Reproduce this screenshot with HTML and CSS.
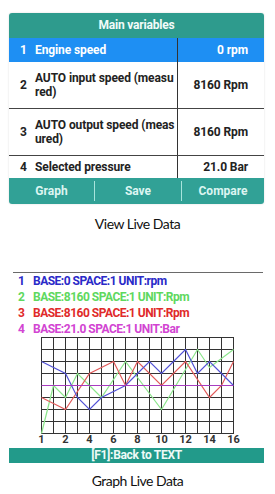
FILE: index.html
```html
<!DOCTYPE html>
<html lang="en">
  <head>
    <meta charset="utf-8" />
    <meta name="viewport" content="width=device-width, initial-scale=1.0" />
    <title>Live Data</title>
    <link rel="stylesheet" href="styles.css">
  </head>
  <body>
    <section class="panel">
      <header class="panel-head">Main variables</header>
      <div class="row row-active">
        <div class="name"><span class="num">1</span><span>Engine speed</span></div>
        <div class="value">0 rpm</div>
      </div>
      <div class="row row-tall">
        <div class="name"><span class="num">2</span><span>AUTO input speed (measu<br />red)</span></div>
        <div class="value">8160 Rpm</div>
      </div>
      <div class="row row-tall">
        <div class="name"><span class="num">3</span><span>AUTO output speed (meas<br />ured)</span></div>
        <div class="value">8160 Rpm</div>
      </div>
      <div class="row row-last">
        <div class="name"><span class="num">4</span><span>Selected pressure</span></div>
        <div class="value">21.0 Bar</div>
      </div>
      <nav class="tabs">
        <span class="tab">Graph</span>
        <span class="tab">Save</span>
        <span class="tab">Compare</span>
      </nav>
    </section>
    <p class="caption caption-first">View Live Data</p>

    <section class="graph-card">
      <div class="plot">
        <ul class="legend">
          <li class="c1"><span class="num">1</span>BASE:0 SPACE:1 UNIT:rpm</li>
          <li class="c2"><span class="num">2</span>BASE:8160 SPACE:1 UNIT:Rpm</li>
          <li class="c3"><span class="num">3</span>BASE:8160 SPACE:1 UNIT:Rpm</li>
          <li class="c4"><span class="num">4</span>BASE:21.0 SPACE:1 UNIT:Bar</li>
        </ul>
        <svg class="chart" width="250" height="111" viewBox="0 0 250 111">
          <!-- 16 x 8 grid, 12px cells -->
          <path class="grid" d="M28.5 0v97M40.5 0v97M52.5 0v97M64.5 0v97M76.5 0v97M88.5 0v97M100.5 0v97M112.5 0v97M124.5 0v97M136.5 0v97M148.5 0v97M160.5 0v97M172.5 0v97M184.5 0v97M196.5 0v97M208.5 0v97M220.5 0v97
            M28 .5h193M28 12.5h193M28 24.5h193M28 36.5h193M28 48.5h193M28 60.5h193M28 72.5h193M28 84.5h193M28 96.5h193" />
          <polyline class="ln-green" points="28.5,96.5 40.5,48.5 52.5,60.5 64.5,36.5 88.5,60.5 112.5,24.5 148.5,72.5 184.5,12.5 196.5,30.5 220.5,12.5" />
          <polyline class="ln-red" points="28.5,60.5 52.5,72.5 76.5,36.5 100.5,24.5 112.5,48.5 124.5,24.5 148.5,48.5 172.5,24.5 196.5,60.5 208.5,48.5 220.5,24.5" />
          <polyline class="ln-blue" points="28.5,24.5 52.5,36.5 64.5,60.5 76.5,72.5 88.5,60.5 112.5,48.5 124.5,36.5 136.5,24.5 148.5,36.5 160.5,24.5 172.5,12.5 184.5,36.5 196.5,24.5 208.5,36.5 220.5,48.5" />
          <line class="ln-pink" x1="28.5" y1="48.5" x2="220.5" y2="48.5" />
          <g class="axis">
            <text x="28.5" y="106">1</text>
            <text x="52.5" y="106">2</text>
            <text x="76.5" y="106">4</text>
            <text x="100.5" y="106">6</text>
            <text x="124.5" y="106">8</text>
            <text x="148.5" y="106">10</text>
            <text x="172.5" y="106">12</text>
            <text x="196.5" y="106">14</text>
            <text x="220.5" y="106">16</text>
          </g>
        </svg>
      </div>
      <div class="back">[F1]:Back to TEXT</div>
    </section>
    <p class="caption caption-second">Graph Live Data</p>
  </body>
</html>
```

FILE: styles.css
```css
html,
body {
  margin: 0;
  background: #fff;
}
body {
  width: 275px;
  padding-top: 13px;
  font-family: Roboto, "Liberation Sans", sans-serif;
}
.panel {
  margin: 0 11px 0 9px;
  border-radius: 3px;
  overflow: hidden;
  box-shadow: 0 0 2px rgba(0, 0, 0, 0.15);
}
.panel-head {
  height: 25px;
  line-height: 25px;
  background: #2e9b8d;
  color: #f2fbf9;
  text-align: center;
  font-size: 12px;
  font-weight: 700;
  letter-spacing: -0.2px;
}
.row {
  display: grid;
  grid-template-columns: 168px 1fr;
  color: #222;
  font-size: 12px;
  font-weight: 700;
  line-height: 14px;
  letter-spacing: -0.1px;
}
.row .name {
  display: flex;
  align-items: center;
  padding-left: 11px;
}
.row .num {
  width: 15px;
  flex: none;
}
.row .value {
  display: flex;
  align-items: center;
  justify-content: flex-end;
  padding-right: 16px;
  border-left: 1px solid #333;
}
.row-active {
  height: 24px;
  background: #1e8ff3;
  color: #fff;
}
.row-tall {
  height: 46px;
  border-bottom: 1px solid #444;
}
.row-last {
  height: 22px;
}
.tabs {
  display: flex;
  align-items: center;
  height: 26px;
  background: #31a196;
}
.tab {
  height: 20px;
  line-height: 20px;
  text-align: center;
  color: #dcf5f1;
  font-size: 12px;
  font-weight: 700;
}
.tab:nth-child(1) {
  width: 85px;
}
.tab:nth-child(2) {
  width: 86px;
  border-left: 1px solid #a8e4dc;
}
.tab:nth-child(3) {
  flex: 1;
  border-left: 1px solid #a8e4dc;
}
.caption {
  margin: 0;
  text-align: center;
  font-family: Lato, "Open Sans", sans-serif;
  font-size: 14px;
  line-height: 20px;
  letter-spacing: -0.5px;
  color: #111;
}
.caption-first {
  margin: 10px 0 38px;
}
.caption-second {
  margin-top: 8px;
}
.graph-card {
  margin: 0 11px 0 9px;
}
.plot {
  margin: 0 1px 0 4px;
  border-top: 1px solid #6a6a6a;
}
.legend {
  list-style: none;
  margin: 0;
  padding: 0 0 0 5px;
  font-size: 12px;
  font-weight: 700;
  line-height: 16px;
  letter-spacing: -0.5px;
}
.legend .num {
  display: inline-block;
  width: 15px;
}
.c1 { color: #2a2ac8; }
.c2 { color: #5ed85e; }
.c3 { color: #e02a2a; }
.c4 { color: #d244d2; }
.chart {
  display: block;
}
.grid {
  fill: none;
  stroke: #333;
  stroke-width: 1;
}
.chart polyline,
.chart line {
  fill: none;
  stroke-width: 1.2;
}
.ln-green { stroke: #8be68b; }
.ln-red { stroke: #e25a5a; }
.ln-blue { stroke: #5252d6; }
.ln-pink { stroke: #a83cc0; stroke-width: 1.5; }
.axis text {
  font-family: Roboto, "Liberation Sans", sans-serif;
  font-size: 11px;
  font-weight: 700;
  fill: #333;
  text-anchor: middle;
}
.back {
  height: 15px;
  line-height: 15px;
  background: #229a8a;
  color: #eefaf7;
  text-align: center;
  font-size: 12px;
  font-weight: 700;
  letter-spacing: -0.3px;
}
```
